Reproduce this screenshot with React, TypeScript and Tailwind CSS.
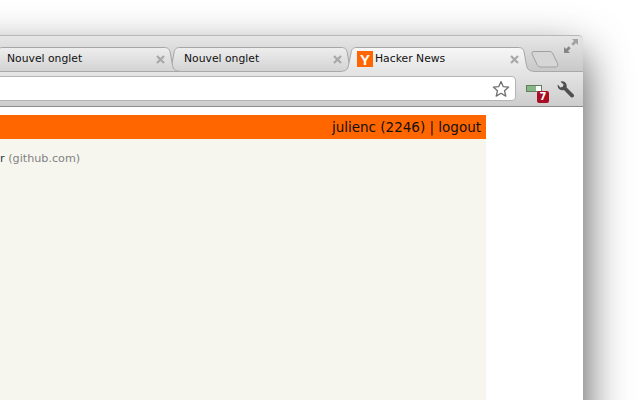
import React from "react";

function TabShape({ active }: { active?: boolean }) {
  const id = active ? "tabA" : "tabI";
  const edge =
    "M0 24C4 24 5.5 22.5 6.5 18.5L9 6C9.8 2 11 0.5 15 0.5H176C180 0.5 181.5 2 182.3 6L184.5 18.5C185.5 22.5 187 24 191 24";
  return (
    <svg className="absolute inset-0" width="191" height="25" viewBox="0 0 191 25" fill="none">
      <defs>
        <linearGradient id={id} x1="0" y1="0" x2="0" y2="1">
          <stop offset="0" stopColor={active ? "#f7f7f7" : "#eeeeee"} />
          <stop offset="1" stopColor={active ? "#e4e4e4" : "#d3d3d3"} />
        </linearGradient>
      </defs>
      <path d={active ? `${edge}V25H0Z` : `${edge}Z`} fill={`url(#${id})`} />
      <path d={edge} stroke="#a6a6a6" />
    </svg>
  );
}

function Tab({ title, active, icon, z }: { title: string; active?: boolean; icon?: boolean; z: string }) {
  return (
    <div className={`relative -mb-px -mr-[14px] h-[25px] w-[191px] shrink-0 ${z}`}>
      <TabShape active={active} />
      <div className={`relative flex h-[24px] items-center pr-[14px] ${icon ? "pl-[15px]" : "pl-[19px]"}`}>
        {icon && (
          <div className="mr-[2px] flex h-[16px] w-[16px] shrink-0 items-center justify-center bg-[#ff6600] font-['Liberation_Sans',sans-serif] text-[15px] font-bold leading-none text-white">
            Y
          </div>
        )}
        <span className="pt-px text-[10.8px] leading-none text-[#111]">{title}</span>
        <svg className="ml-auto" width="9" height="9" viewBox="0 0 9 9">
          <path d="M1 1L8 8M8 1L1 8" stroke="#a8a8a8" strokeWidth="2.2" />
        </svg>
      </div>
    </div>
  );
}

export default function App() {
  return (
    <div className="h-[400px] w-[640px] overflow-hidden bg-white pt-[35px] font-['DejaVu_Sans',sans-serif]">
      <div className="ml-[-60px] h-[500px] w-[643px] rounded-t-[5px] bg-white shadow-[0_20px_45px_rgba(0,0,0,0.72)]">
        <div className="relative z-10 flex h-[36px] items-end justify-between rounded-t-[5px] border-t border-[#b8b8b8] bg-gradient-to-b from-[#e6e6e6] to-[#c9c9c9]">
          <div className="flex items-end pl-[48px]">
            <Tab title="Nouvel onglet" z="z-[3]" />
            <Tab title="Nouvel onglet" z="z-[2]" />
            <Tab title="Hacker News" active icon z="z-[4]" />
            <svg className="mb-[3px] ml-[12px]" width="28" height="17" viewBox="0 0 28 17" fill="none">
              <path
                d="M3 0.5H18C20 0.5 21 1 22 3L26.5 12.5C27.5 15.5 26 16 24 16H10C8 16 7 15.5 6 13.5L1 3C0.5 1.5 1 0.5 3 0.5Z"
                fill="#d6d6d6"
                stroke="#a0a0a0"
              />
            </svg>
          </div>
          <svg className="mb-[17px] mr-[4px]" width="16" height="16" viewBox="0 0 16 16">
            <path d="M9 1H15V7L13 5L10.3 7.7L8.3 5.7L11 3Z" fill="#a2a2a2" />
            <path d="M1 9V15H7L5 13L7.7 10.3L5.7 8.3L3 11Z" fill="#868686" />
          </svg>
        </div>
        <div className="flex h-[36px] items-start border-y border-t-[#a9a9a9] border-b-[#8c8c8c] bg-gradient-to-b from-[#e5e5e5] to-[#cdcdcd] pt-[4px]">
          <div className="flex h-[25px] w-[576px] shrink-0 items-center justify-end rounded-r-[4px] border border-[#b4b4b4] bg-white pr-[5px]">
            <svg width="18" height="18" viewBox="0 0 18 18" fill="none">
              <path
                d="M9 1.5L11.2 6.6L16.7 7.1L12.5 10.7L13.8 16.1L9 13.3L4.2 16.1L5.5 10.7L1.3 7.1L6.8 6.6Z"
                stroke="#6f6f6f"
                strokeWidth="1.3"
                strokeLinejoin="round"
              />
            </svg>
          </div>
          <div className="relative ml-[10px] mt-[9px] h-[7px] w-[16px] shrink-0 border border-[#5e7f5e] bg-[#86b886]">
            <div className="absolute right-0 top-0 h-full w-[5px] bg-white" />
            <div className="absolute left-[10px] top-[5px] flex h-[12px] w-[12px] items-center justify-center rounded-[2px] bg-[#a80f24] text-[10px] font-bold leading-none text-white">
              7
            </div>
          </div>
          <svg className="ml-[15px] mt-[4px] shrink-0" width="18" height="18" viewBox="0 0 18 18">
            <path
              d="M16.6 14.4L9.6 7.6C10.1 5.4 9.4 3.3 7.7 2.1C6.4 1.2 4.9 1.1 3.6 1.7L6.6 4.5L5.8 6.8L3.3 7.4L0.8 4.5C0.3 6.2 0.9 8 2.3 9.2C3.7 10.3 5.4 10.6 7 10.1L13.7 16.9C14.6 17.6 15.8 17.6 16.6 16.8C17.3 16.1 17.3 15.1 16.6 14.4Z"
              fill="#505050"
            />
          </svg>
        </div>
        <div className="w-[546px] pt-[8px]">
          <div className="flex h-[24px] items-center justify-end bg-[#ff6600] pr-[5px] pt-px text-[13.5px] leading-none text-[#111]">
            julienc (2246) | logout
          </div>
          <div className="h-[360px] bg-[#f6f6ef] pl-[60px] pt-[14px] text-[11.2px] leading-none text-[#828282]">
            <span className="text-[#1a3a4a]">r</span> (github.com)
          </div>
        </div>
      </div>
    </div>
  );
}
